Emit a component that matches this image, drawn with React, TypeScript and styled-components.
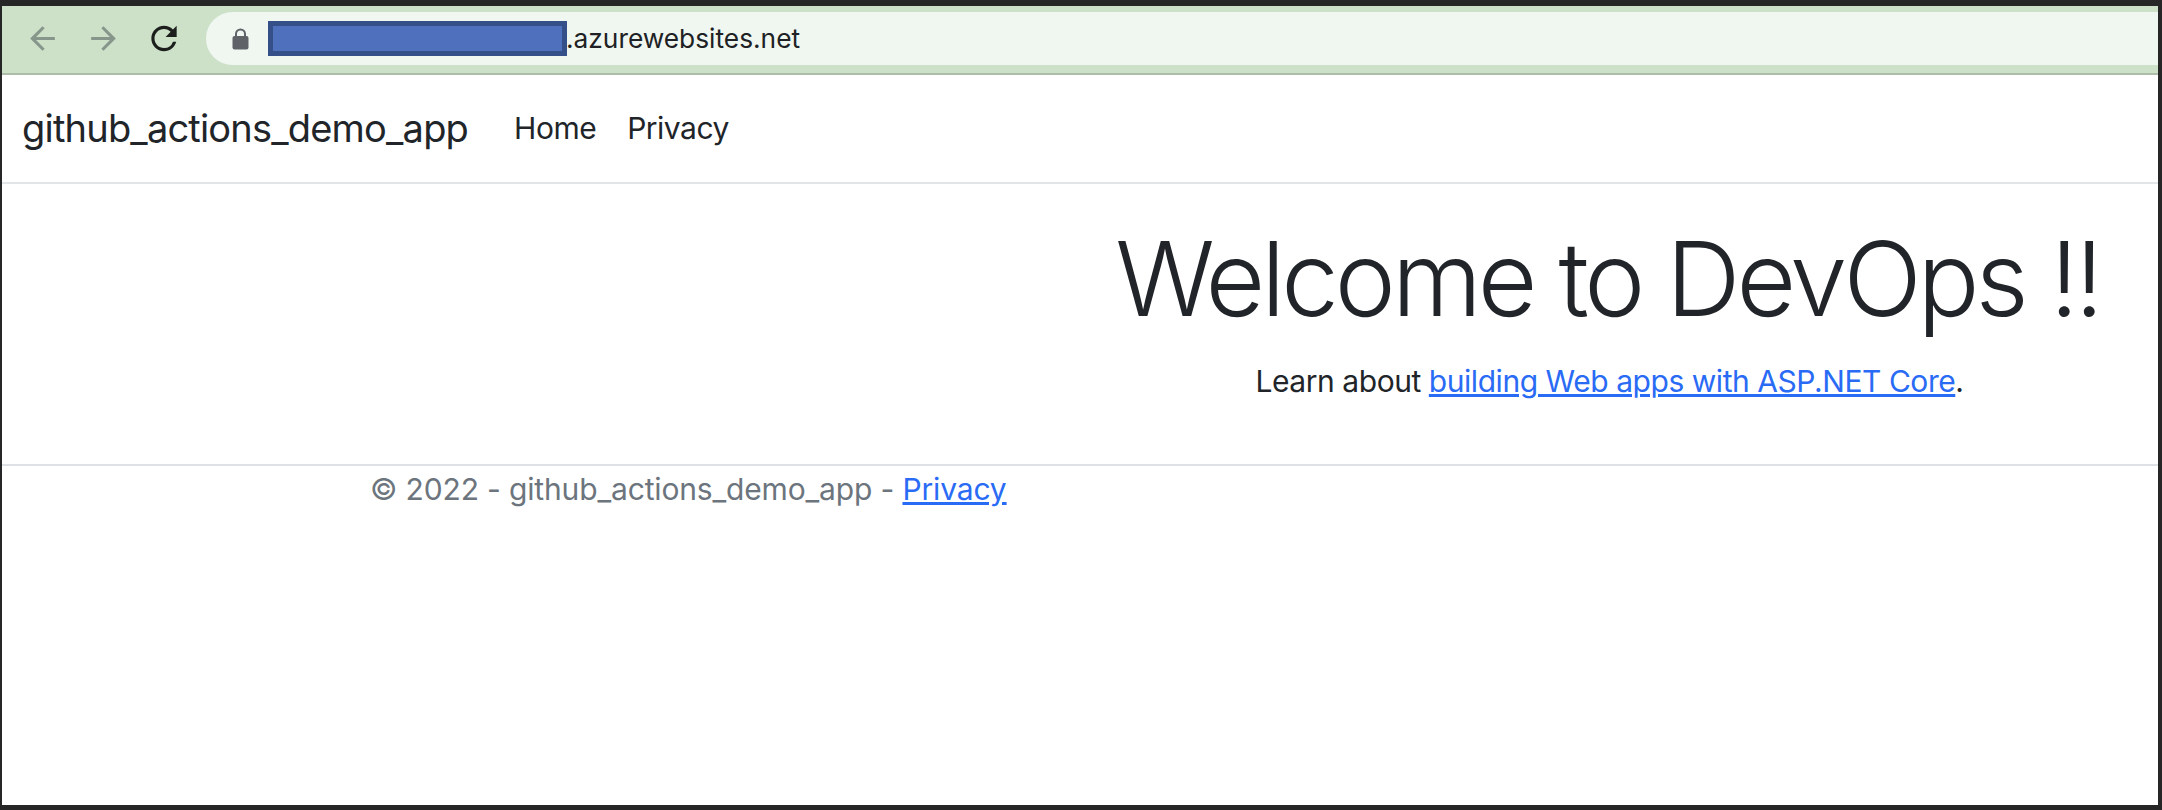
import styled, { createGlobalStyle } from 'styled-components'
import { MdArrowBack, MdArrowForward, MdRefresh } from 'react-icons/md'

const GlobalStyle = createGlobalStyle`
  html, body {
    margin: 0;
    padding: 0;
    background: #fff;
  }
  body {
    font-family: Inter, "Liberation Sans", sans-serif;
    color: #212529;
  }
`

const Frame = styled.div`
  box-sizing: border-box;
  width: 2162px;
  height: 810px;
  overflow: hidden;
  display: flex;
  flex-direction: column;
  background: #fff;
  border-style: solid;
  border-color: #262626;
  border-width: 6px 4px 5px 2px;
`

const Toolbar = styled.div`
  box-sizing: border-box;
  height: 69px;
  flex: none;
  display: flex;
  align-items: flex-start;
  padding: 6px 0 0 21px;
  background: #cde1c9;
  border-bottom: 2px solid #adbdaa;
`

const NavButton = styled.div<{ $color: string }>`
  width: 38px;
  height: 53px;
  margin-right: 23px;
  flex: none;
  display: flex;
  align-items: center;
  justify-content: center;
  color: ${(p) => p.$color};
`

const Omnibox = styled.div`
  flex: 1;
  height: 53px;
  display: flex;
  align-items: center;
  padding-left: 26px;
  background: #f0f7f0;
  border-radius: 27px 0 0 27px;
`

const Lock = styled.svg`
  width: 17px;
  height: 22px;
  margin-right: 19px;
  flex: none;
`

const Redaction = styled.div`
  box-sizing: border-box;
  width: 299px;
  height: 35px;
  flex: none;
  background: #4f71bd;
  border: 5px solid #355089;
`

const UrlText = styled.span`
  font-size: 26.3px;
  color: #202124;
  margin-left: -1px;
`

const Navbar = styled.nav`
  box-sizing: border-box;
  height: 109px;
  flex: none;
  display: flex;
  align-items: center;
  padding: 0 0 2px 20px;
  border-bottom: 2px solid #e2e5e8;
`

const Brand = styled.a`
  font-size: 38px;
  letter-spacing: -0.8px;
  color: #212529;
  margin-right: 46px;
`

const NavLink = styled.a`
  font-size: 30px;
  letter-spacing: -0.5px;
  color: #212529;
  margin-right: 31px;
`

const Main = styled.main`
  box-sizing: border-box;
  height: 282px;
  flex: none;
  display: flex;
  flex-direction: column;
  align-items: center;
  padding: 34px 0 0 1055px;
  border-bottom: 2px solid #dee2e6;
`

const Heading = styled.h1`
  margin: 0;
  font-size: 103px;
  line-height: 121px;
  font-weight: 300;
  letter-spacing: -4px;
  color: #212529;
  white-space: nowrap;
`

const Lead = styled.p`
  margin: 22px 0 0 4px;
  font-size: 30px;
  line-height: 40px;
  letter-spacing: -0.45px;
  color: #212529;
`

const BlueLink = styled.a`
  color: #2a6bf5;
  text-decoration: underline;
`

const Footer = styled.footer`
  padding: 3px 0 0 368px;
  font-size: 30px;
  line-height: 40px;
  letter-spacing: -0.15px;
  color: #6c757d;
`

export default function App() {
  return (
    <>
      <GlobalStyle />
      <Frame>
        <Toolbar>
          <NavButton $color="#87968a">
            <MdArrowBack size={37} />
          </NavButton>
          <NavButton $color="#87968a">
            <MdArrowForward size={37} />
          </NavButton>
          <NavButton $color="#1c1f1c">
            <MdRefresh size={39} />
          </NavButton>
          <Omnibox>
            <Lock viewBox="0 0 17 22">
              <path d="M4 9V6a4.5 4.5 0 0 1 9 0v3" fill="none" stroke="#5f6368" strokeWidth="2" />
              <rect x="0.5" y="8" width="16" height="13.5" rx="2" fill="#5f6368" />
            </Lock>
            <Redaction />
            <UrlText>.azurewebsites.net</UrlText>
          </Omnibox>
        </Toolbar>
        <Navbar>
          <Brand>github_actions_demo_app</Brand>
          <NavLink>Home</NavLink>
          <NavLink>Privacy</NavLink>
        </Navbar>
        <Main>
          <Heading>Welcome to DevOps !!</Heading>
          <Lead>
            Learn about <BlueLink>building Web apps with ASP.NET Core</BlueLink>.
          </Lead>
        </Main>
        <Footer>
          © 2022 - github_actions_demo_app - <BlueLink>Privacy</BlueLink>
        </Footer>
      </Frame>
    </>
  )
}
